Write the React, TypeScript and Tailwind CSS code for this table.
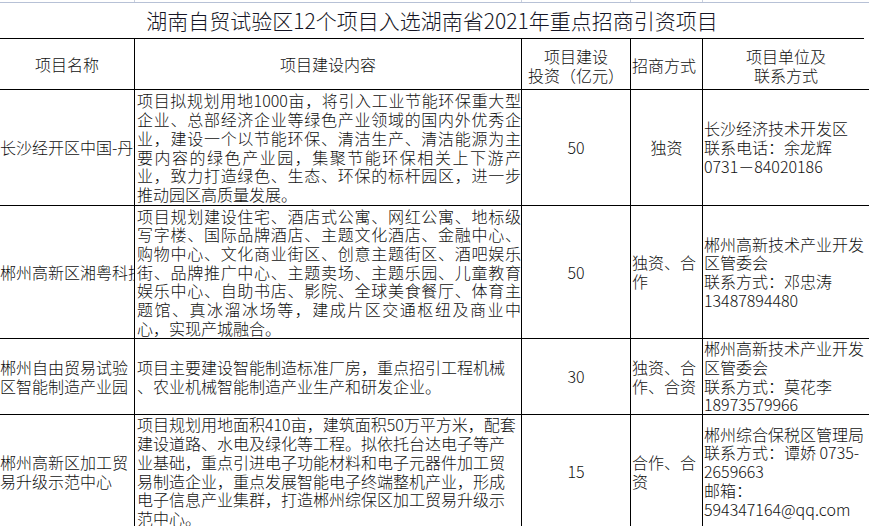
const font = "font-['Noto_Sans_CJK_SC',sans-serif]"

const cols = ["w-[135px]", "w-[387px]", "w-[109px]", "w-[72px]", "w-[200px]"]

const rows = [
  {
    h: "h-[116px]",
    name: ["长沙经开区中国-丹麦节能环保产业园"],
    nameWrap: false,
    content: [
      "项目拟规划用地1000亩，将引入工业节能环保重大型",
      "企业、总部经济企业等绿色产业领域的国内外优秀企",
      "业，建设一个以节能环保、清洁生产、清洁能源为主",
      "要内容的绿色产业园，集聚节能环保相关上下游产",
      "业，致力打造绿色、生态、环保的标杆园区，进一步",
      "推动园区高质量发展。",
    ],
    justify: true,
    amount: "50",
    mode: ["独资"],
    modeCenter: true,
    unit: ["长沙经济技术开发区", "联系电话：余龙辉", "0731－84020186"],
  },
  {
    h: "h-[133px]",
    name: ["郴州高新区湘粤科技产业园"],
    nameWrap: false,
    content: [
      "项目规划建设住宅、酒店式公寓、网红公寓、地标级",
      "写字楼、国际品牌酒店、主题文化酒店、金融中心、",
      "购物中心、文化商业街区、创意主题街区、酒吧娱乐",
      "街、品牌推广中心、主题卖场、主题乐园、儿童教育",
      "娱乐中心、自助书店、影院、全球美食餐厅、体育主",
      "题馆、真冰溜冰场等，建成片区交通枢纽及商业中",
      "心，实现产城融合。",
    ],
    justify: true,
    amount: "50",
    mode: ["独资、合", "作"],
    modeCenter: false,
    unit: ["郴州高新技术产业开发", "区管委会", "联系方式：邓忠涛", "13487894480"],
  },
  {
    h: "h-[76px]",
    name: ["郴州自由贸易试验", "区智能制造产业园"],
    nameWrap: true,
    content: [
      "项目主要建设智能制造标准厂房，重点招引工程机械",
      "、农业机械智能制造产业生产和研发企业。",
    ],
    justify: false,
    amount: "30",
    mode: ["独资、合", "作、合资"],
    modeCenter: false,
    unit: ["郴州高新技术产业开发", "区管委会", "联系方式：莫花李", "18973579966"],
  },
  {
    h: "h-[114px]",
    name: ["郴州高新区加工贸", "易升级示范中心"],
    nameWrap: true,
    content: [
      "项目规划用地面积410亩，建筑面积50万平方米，配套",
      "建设道路、水电及绿化等工程。拟依托台达电子等产",
      "业基础，重点引进电子功能材料和电子元器件加工贸",
      "易制造企业，重点发展智能电子终端整机产业，形成",
      "电子信息产业集群，打造郴州综保区加工贸易升级示",
      "范中心。",
    ],
    justify: false,
    amount: "15",
    mode: ["合作、合", "资"],
    modeCenter: false,
    unit: ["郴州综合保税区管理局", "联系方式：谭娇 0735-", "2659663", "邮箱：", "594347164@qq.com"],
  },
]

export default function App() {
  return (
    <div className={`w-[869px] h-[526px] overflow-hidden bg-white text-[#111] ${font} font-light text-[16px] leading-[18.7px]`}>
      <div className="w-[903px]">
        {/* sheet gridline strip above the title */}
        <div className="flex h-[3px] border-b border-[#b7c1d6]">
          {cols.map((c, i) => (
            <div key={i} className={`${c} shrink-0 border-r border-[#c9d0de]`} />
          ))}
        </div>

        <div className="h-[36px] w-[864px] border-b border-black flex items-center justify-center text-[21px] leading-none text-[#151525]">
          湖南自贸试验区12个项目入选湖南省2021年重点招商引资项目
        </div>

        <div className="flex h-[51px] border-b border-black">
          <div className={`${cols[0]} shrink-0 border-r border-black flex items-center justify-center`}>项目名称</div>
          <div className={`${cols[1]} shrink-0 border-r border-black flex items-center justify-center`}>项目建设内容</div>
          <div className={`${cols[2]} shrink-0 border-r border-black flex flex-col items-center justify-center pt-[3px]`}>
            <span>项目建设</span>
            <span>投资（亿元）</span>
          </div>
          <div className={`${cols[3]} shrink-0 border-r border-black flex items-center pl-[1px] pt-[2px]`}>招商方式</div>
          <div className={`${cols[4]} shrink-0 flex flex-col justify-center pl-[42px] pt-[3px]`}>
            <span className="w-[82px] text-center">项目单位及</span>
            <span className="w-[82px] text-center">联系方式</span>
          </div>
        </div>

        {rows.map((r, ri) => (
          <div key={ri} className={`flex ${r.h} border-b border-black`}>
            <div className={`${cols[0]} shrink-0 border-r border-black flex flex-col justify-center overflow-hidden`}>
              {r.name.map((l, i) => (
                <div key={i} className={r.nameWrap ? "" : "whitespace-nowrap"}>{l}</div>
              ))}
            </div>
            <div className={`${cols[1]} shrink-0 border-r border-black flex flex-col justify-center pl-[2px] overflow-hidden`}>
              {r.content.map((l, i) => {
                const last = i === r.content.length - 1
                return (
                  <div
                    key={i}
                    className={
                      r.justify && !last
                        ? "whitespace-nowrap text-justify [text-align-last:justify]"
                        : "whitespace-nowrap"
                    }
                  >
                    {l}
                  </div>
                )
              })}
            </div>
            <div className={`${cols[2]} shrink-0 border-r border-black flex items-center justify-center`}>{r.amount}</div>
            <div
              className={`${cols[3]} shrink-0 border-r border-black flex flex-col justify-center ${
                r.modeCenter ? "items-center" : "pl-[1px]"
              }`}
            >
              {r.mode.map((l, i) => (
                <div key={i} className="whitespace-nowrap">{l}</div>
              ))}
            </div>
            <div className={`${cols[4]} shrink-0 flex flex-col justify-center pl-[1px]`}>
              {r.unit.map((l, i) => (
                <div key={i} className="whitespace-nowrap">{l}</div>
              ))}
            </div>
          </div>
        ))}
      </div>
    </div>
  )
}
